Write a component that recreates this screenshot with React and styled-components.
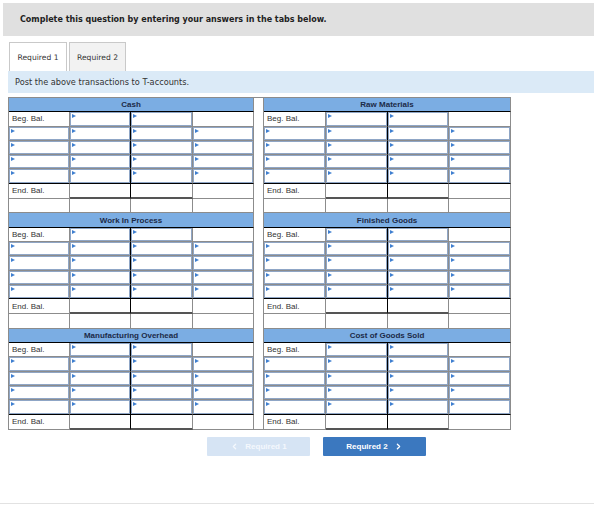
import React from 'react';
import styled, { createGlobalStyle } from 'styled-components';
import { ChevronLeft, ChevronRight } from 'lucide-react';

const GlobalStyle = createGlobalStyle`
  body {
    margin: 0;
    background: #fff;
    font-family: "DejaVu Sans", Verdana, sans-serif;
  }
`;

const Page = styled.div`
  width: 594px;
  height: 508px;
  overflow: hidden;
`;

const Banner = styled.div`
  margin: 3px 0 0 3px;
  height: 33px;
  background: #e0e0e0;
  display: flex;
  align-items: center;
  padding-left: 17px;
  font: bold 8px "DejaVu Sans", Verdana, sans-serif;
  color: #222;
`;

const TabBar = styled.div`
  display: flex;
  gap: 2px;
  margin: 6px 0 0 9px;
  height: 29px;
`;

const Tab = styled.div`
  width: ${(p) => (p.$active ? '58px' : '57px')};
  box-sizing: border-box;
  border: 1px solid #c9c9c9;
  border-bottom: none;
  background: ${(p) => (p.$active ? '#fff' : '#f2f2f2')};
  display: flex;
  align-items: center;
  justify-content: center;
  font: 7.6px "DejaVu Sans", Verdana, sans-serif;
  color: #333;
`;

const Instruction = styled.div`
  margin-left: 8px;
  height: 22px;
  background: #dbeaf7;
  display: flex;
  align-items: center;
  padding-left: 7px;
  font: 8.2px "DejaVu Sans", Verdana, sans-serif;
  color: #333;
`;

const TableWrap = styled.div`
  margin: 4px 0 0 8px;
`;

const Sheet = styled.table`
  border-spacing: 0;
  table-layout: fixed;
  width: 502px;
  border-top: 1px solid #8c8c8c;
  border-left: 1px solid #8c8c8c;
  font: 8px "Liberation Sans", Arial, sans-serif;
  color: #333;
`;

const Cell = styled.td`
  height: 13.3px;
  padding: 0;
  border-right: 1px solid ${(p) => (p.$blackRight ? '#000' : '#8c8c8c')};
  border-bottom: ${(p) =>
    p.$thickBottom ? '2px solid #555' : `1px solid ${p.$blackBottom ? '#000' : '#8c8c8c'}`};
  background: #fff;
  vertical-align: middle;
`;

const HeadCell = styled(Cell)`
  background: #7badE3;
  text-align: center;
  font-weight: bold;
  color: #1b2a48;
  border-bottom: 1px solid #000;
`;

const Spacer = styled.td`
  padding: 0;
  border-right: 1px solid #8c8c8c;
  border-bottom: 1px solid #8c8c8c;
  background: #fff;
`;

const Label = styled.span`
  padding-left: 3px;
  white-space: nowrap;
`;

const InputBox = styled.div`
  position: relative;
  box-sizing: border-box;
  height: 13.3px;
  border: 1px solid #8fa6c6;
  background: #fff;

  &::before {
    content: '';
    position: absolute;
    top: 1px;
    left: 1px;
    border-left: 4px solid #3f7fd0;
    border-top: 2px solid transparent;
    border-bottom: 2px solid transparent;
  }
`;

const NavRow = styled.div`
  display: flex;
  justify-content: center;
  gap: 13px;
  margin-top: 7px;
  padding-left: 39px;
`;

const NavButton = styled.div`
  width: 103px;
  height: 19px;
  display: flex;
  align-items: center;
  justify-content: center;
  gap: 6px;
  background: ${(p) => (p.$disabled ? '#d6e4f4' : '#3b78bf')};
  color: ${(p) => (p.$disabled ? '#f4f8fd' : '#fff')};
  font: bold 8px "Liberation Sans", Arial, sans-serif;
  border-radius: 1px;
`;

const Footer = styled.div`
  margin-top: 47px;
  border-top: 1px solid #e2e2e2;
`;

const accounts = [
  ['Cash', 'Raw Materials'],
  ['Work In Process', 'Finished Goods'],
  ['Manufacturing Overhead', 'Cost of Goods Sold'],
];

const TOTAL_ROWS = 23;

const HalfHeader = ({ title }) => <HeadCell colSpan={4}>{title}</HeadCell>;

const HalfBeg = () => (
  <>
    <Cell><Label>Beg. Bal.</Label></Cell>
    <Cell $blackRight><InputBox /></Cell>
    <Cell><InputBox /></Cell>
    <Cell />
  </>
);

const HalfEntry = ({ last }) => (
  <>
    <Cell $blackBottom={last}><InputBox /></Cell>
    <Cell $blackBottom={last} $blackRight><InputBox /></Cell>
    <Cell $blackBottom={last}><InputBox /></Cell>
    <Cell $blackBottom={last}><InputBox /></Cell>
  </>
);

const HalfEnd = () => (
  <>
    <Cell><Label>End. Bal.</Label></Cell>
    <Cell $blackRight $thickBottom />
    <Cell $thickBottom />
    <Cell />
  </>
);

const HalfBlank = () => (
  <>
    <Cell />
    <Cell />
    <Cell />
    <Cell />
  </>
);

const App = () => {
  const rows = [];
  accounts.forEach(([left, right], i) => {
    rows.push(
      <tr key={`h${i}`}>
        <HalfHeader title={left} />
        {i === 0 && <Spacer rowSpan={TOTAL_ROWS} />}
        <HalfHeader title={right} />
      </tr>
    );
    rows.push(
      <tr key={`b${i}`}>
        <HalfBeg />
        <HalfBeg />
      </tr>
    );
    [0, 1, 2, 3].forEach((r) => {
      rows.push(
        <tr key={`e${i}${r}`}>
          <HalfEntry last={r === 3} />
          <HalfEntry last={r === 3} />
        </tr>
      );
    });
    rows.push(
      <tr key={`n${i}`}>
        <HalfEnd />
        <HalfEnd />
      </tr>
    );
    if (i < accounts.length - 1) {
      rows.push(
        <tr key={`x${i}`}>
          <HalfBlank />
          <HalfBlank />
        </tr>
      );
    }
  });

  return (
    <Page>
      <GlobalStyle />
      <Banner>Complete this question by entering your answers in the tabs below.</Banner>
      <TabBar>
        <Tab $active>Required 1</Tab>
        <Tab>Required 2</Tab>
      </TabBar>
      <Instruction>Post the above transactions to T-accounts.</Instruction>
      <TableWrap>
        <Sheet>
          <colgroup>
            {[61, 61, 62, 61, 10, 62, 62, 61, 62].map((w, i) => (
              <col key={i} style={{ width: w }} />
            ))}
          </colgroup>
          <tbody>{rows}</tbody>
        </Sheet>
      </TableWrap>
      <NavRow>
        <NavButton $disabled>
          <ChevronLeft size={9} strokeWidth={3.5} />
          Required 1
        </NavButton>
        <NavButton>
          Required 2
          <ChevronRight size={9} strokeWidth={3.5} />
        </NavButton>
      </NavRow>
      <Footer />
    </Page>
  );
};

export default App;
